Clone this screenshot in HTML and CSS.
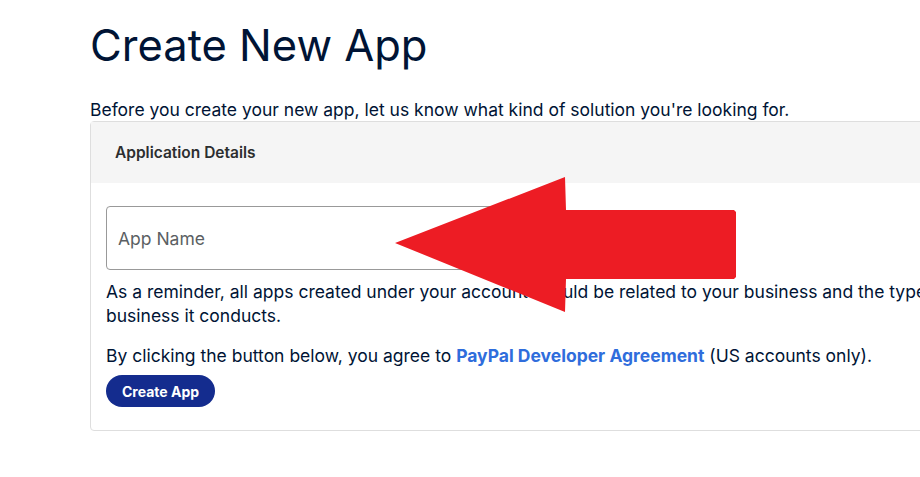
FILE: index.html
```html
<!DOCTYPE html>
<html lang="en">
<head>
  <meta charset="UTF-8">
  <meta name="viewport" content="width=device-width, initial-scale=1.0">
  <title>Create New App</title>
  <link rel="stylesheet" href="styles.css">
</head>
<body>
  <div class="page">
    <h1>Create New App</h1>
    <p class="intro">Before you create your new app, let us know what kind of solution you're looking for.</p>

    <div class="card">
      <div class="card-header">Application Details</div>
      <div class="card-body">
        <input class="app-name" type="text" placeholder="App Name">
        <p class="note">As a reminder, all apps created under your account should be related to your business and the type of business it conducts.</p>
        <p class="note agree">By clicking the button below, you agree to <a href="#">PayPal Developer Agreement</a> (US accounts only).</p>
        <button type="button" class="create-btn">Create App</button>
      </div>
    </div>
  </div>

  <!-- Freccia rossa sopra il modulo -->
  <svg class="arrow" width="350" height="140" viewBox="0 0 350 140">
    <path d="M3 67 L173 1 L174 34 L342 34 L344 36 L344 101 L342 103 L174 103 L173 136 Z" fill="#ed1c24"/>
  </svg>
</body>
</html>
```

FILE: styles.css
```css
body {
  margin: 0;
  font-family: Inter, "Noto Sans", sans-serif;
  color: #001435;
  background-color: #fff;
  overflow: hidden;
}
.page {
  padding: 17px 0 0 90px;
  width: 1000px;
}
h1 {
  font-size: 43.5px;
  font-weight: 400;
  margin: 0 0 26px;
  line-height: 56px;
}
.intro {
  font-size: 17.5px;
  margin: 0;
  line-height: 22px;
}
.card {
  border: 1px solid #dedede;
  border-radius: 4px;
  width: 900px;
}
.card-header {
  background-color: #f5f5f5;
  height: 61px;
  line-height: 61px;
  padding-left: 24px;
  font-size: 15.5px;
  font-weight: 600;
  color: #2c2e2f;
}
.card-body {
  padding: 23px 16px 23px 15px;
}
.app-name {
  display: block;
  box-sizing: border-box;
  width: 440px;
  height: 64px;
  border: 1px solid #999;
  border-radius: 4px;
  padding: 0 11px;
  font-family: inherit;
  font-size: 17.5px;
  color: #001435;
}
.app-name::placeholder {
  color: #5b5f63;
}
.note {
  font-size: 17.5px;
  line-height: 24px;
  margin: 10px 0 0;
}
.agree {
  margin-top: 16px;
}
.agree a {
  color: #2f6ddc;
  font-weight: 700;
  text-decoration: none;
}
.create-btn {
  margin-top: 7px;
  height: 32px;
  padding: 0 16px;
  border: none;
  border-radius: 16px;
  background-color: #142c8e;
  color: #fff;
  font-family: inherit;
  font-size: 14px;
  font-weight: 700;
  cursor: pointer;
}
.arrow {
  position: absolute;
  left: 392px;
  top: 176px;
}
```
